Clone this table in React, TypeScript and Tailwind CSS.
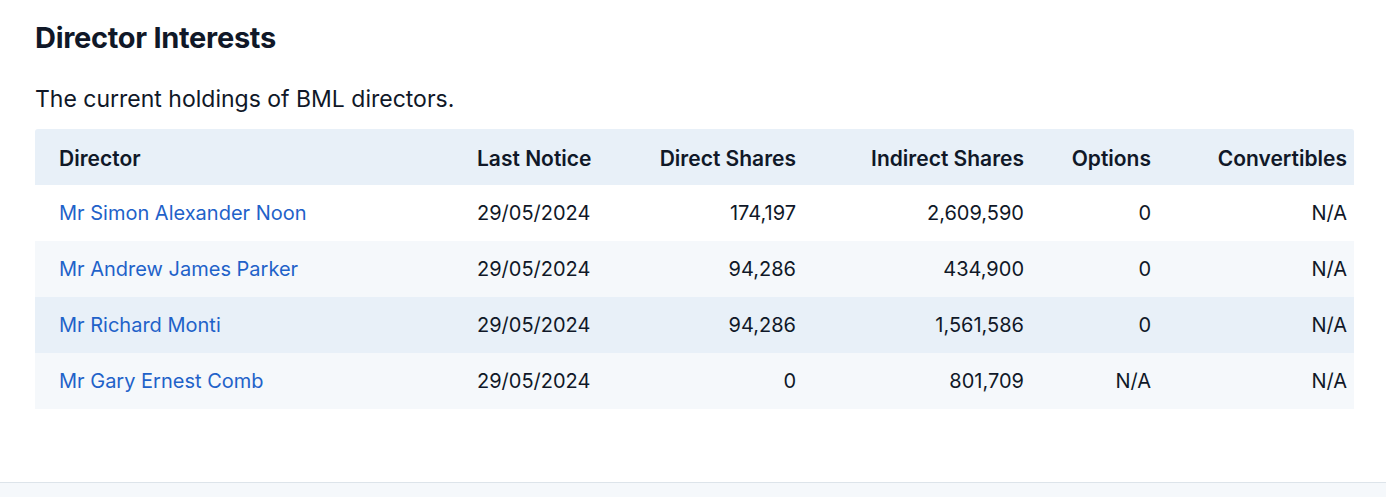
const rows = [
  { name: "Mr Simon Alexander Noon", date: "29/05/2024", direct: "174,197", indirect: "2,609,590", options: "0", conv: "N/A" },
  { name: "Mr Andrew James Parker", date: "29/05/2024", direct: "94,286", indirect: "434,900", options: "0", conv: "N/A" },
  { name: "Mr Richard Monti", date: "29/05/2024", direct: "94,286", indirect: "1,561,586", options: "0", conv: "N/A" },
  { name: "Mr Gary Ernest Comb", date: "29/05/2024", direct: "0", indirect: "801,709", options: "N/A", conv: "N/A" },
];

const rowBg = ["bg-white", "bg-[#f5f8fb]", "bg-[#e8f0f8]", "bg-[#f5f8fb]"];

export default function App() {
  return (
    <div className="min-h-[497px] bg-white font-['Inter',sans-serif] text-[#101828] flex flex-col">
      <section className="px-[35px] pt-[19px] pb-[73px] w-[1354px] box-content">
        <h2 className="text-[29px] font-bold leading-[38px] tracking-[-0.01em]">Director Interests</h2>
        <p className="mt-[27px] text-[23px] leading-[30px]">The current holdings of BML directors.</p>
        <table className="mt-[15px] w-[1319px] table-fixed border-collapse text-[20px]">
          <colgroup>
            <col className="w-[418px]" />
            <col className="w-[161px]" />
            <col className="w-[206px]" />
            <col className="w-[228px]" />
            <col className="w-[127px]" />
            <col className="w-[179px]" />
          </colgroup>
          <thead>
            <tr className="h-[56px] bg-[#e8f0f8] text-[21px]">
              <th className="pl-6 pt-1 text-left font-semibold rounded-tl-[3px]">Director</th>
              <th className="pl-6 pt-1 text-left font-semibold">Last Notice</th>
              <th className="pr-6 pt-1 text-right font-semibold">Direct Shares</th>
              <th className="pr-6 pt-1 text-right font-semibold">Indirect Shares</th>
              <th className="pr-6 pt-1 text-right font-semibold">Options</th>
              <th className="pr-[7px] pt-1 text-right font-semibold rounded-tr-[3px]">Convertibles</th>
            </tr>
          </thead>
          <tbody>
            {rows.map((r, i) => (
              <tr key={r.name} className={`h-[56px] ${rowBg[i]}`}>
                <td className="pl-6">
                  <a href="#" className="text-[#1f62c9]">{r.name}</a>
                </td>
                <td className="pl-6">{r.date}</td>
                <td className="pr-6 text-right">{r.direct}</td>
                <td className="pr-6 text-right">{r.indirect}</td>
                <td className="pr-6 text-right">{r.options}</td>
                <td className="pr-[7px] text-right">{r.conv}</td>
              </tr>
            ))}
          </tbody>
        </table>
      </section>
      <div className="flex-1 border-t border-[#dde4ea] bg-[#f5f8fb]" />
    </div>
  );
}
